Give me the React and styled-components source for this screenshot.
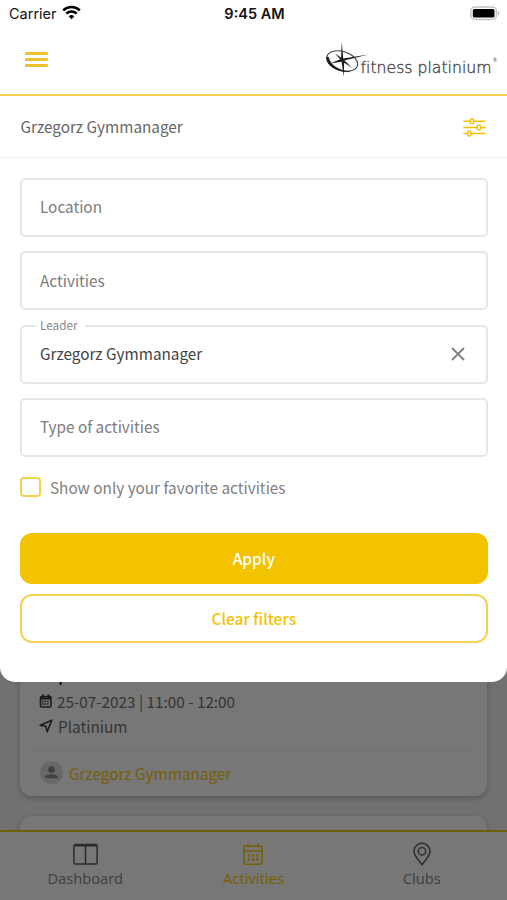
import React, { useState } from 'react'
import styled, { createGlobalStyle } from 'styled-components';

const yellow = '#f3c300';

const GlobalStyle = createGlobalStyle`
  * { box-sizing: border-box; }
  body {
    margin: 0;
    background: #fff;
    font-family: "Noto Sans CJK SC", "Noto Sans", sans-serif;
    overflow: hidden;
  }
  button { font-family: inherit; cursor: pointer; }
`;

// every layer sits in the same grid cell
const Screen = styled.div`
  display: grid;
  width: 507px;
  height: 900px;
  overflow: hidden;
`;

const Layer = styled.div`
  grid-area: 1 / 1;
  display: flex;
  flex-direction: column;
  min-height: 0;
  height: 900px;
`;

const Backdrop = styled(Layer)`
  background: rgba(0, 0, 0, 0.53);
`;

/* activities page, under the backdrop */

const Page = styled(Layer)`
  background: #f1f1f1;
`;

const List = styled.div`
  display: flex;
  flex-direction: column;
  gap: 20px;
  height: 830px;
  padding: 600px 20px 0;
  overflow: hidden;
`;

const Card = styled.div`
  flex: none;
  height: 196px;
  padding: 64px 12px 0;
  border-radius: 12px;
  background: #fcfcfc;
  box-shadow: 0 2px 6px rgba(0, 0, 0, 0.25);
`;

const CardTitle = styled.div`
  height: 24px;
  padding-left: 8px;
  line-height: 20px;
  font-size: 16px;
  font-weight: 500;
  color: #222;
`;

const CardLine = styled.div`
  display: flex;
  align-items: center;
  gap: ${({ $gap }) => $gap}px;
  height: 25px;
  padding-left: 7px;
  font-size: 15.3px;
  line-height: 24px;
  color: #707070;
`;

const CardLeader = styled.div`
  display: flex;
  align-items: center;
  gap: 6px;
  height: 44px;
  margin-top: 12px;
  padding-left: 8px;
  border-top: 1px solid #f0f0f0;
  font-size: 15.3px;
  line-height: 24px;
  color: #fbcb0c;
`;

const Nav = styled.nav`
  display: grid;
  grid-template-columns: repeat(3, 1fr);
  height: 70px;
  padding: 0 1px;
  border-top: 2px solid ${yellow};
  background: #fcfcfc;
`;

const NavItem = styled.div`
  display: flex;
  flex-direction: column;
  align-items: center;
  padding-top: 10px;
  font-family: "Noto Sans", sans-serif;
  font-size: 14.6px;
  line-height: 24px;
  color: ${({ $active }) => ($active ? '#fbcb0c' : '#8c8c8c')};
  svg { flex: none; }
`;

/* top part and filter sheet */

const Sheet = styled.div`
  height: 681.5px;
  border-radius: 0 0 15px 15px;
  background: #fff;
`;

const StatusBar = styled.div`
  display: grid;
  grid-template-columns: 1fr auto 1fr;
  align-items: center;
  height: 28px;
  padding: 0 7px 1px 9px;
  font-family: Inter, sans-serif;
  font-size: 14.5px;
  color: #111;
`;

const Carrier = styled.span`
  display: flex;
  align-items: center;
  gap: 6px;
  svg { margin: -2px 0 0 -1px; }
`;

const Time = styled.span`
  font-weight: 600;
  font-size: 14.5px;
`;

const Battery = styled.svg`
  justify-self: end;
`;

const Header = styled.header`
  display: flex;
  justify-content: space-between;
  height: 67.5px;
  padding: 0 10px 0 25px;
  border-bottom: 2px solid #f2d04a;
`;

const MenuButton = styled.button`
  display: flex;
  flex-direction: column;
  gap: 3.5px;
  width: 23px;
  margin-top: 24px;
  padding: 0;
  border: none;
  background: none;
`;

const MenuLine = styled.span`
  height: 2.5px;
  border-radius: 1px;
  background: #ecc32c;
`;

const Logo = styled.svg`
  margin-top: 12px;
`;

const FilterBar = styled.div`
  display: flex;
  align-items: center;
  justify-content: space-between;
  height: 62.5px;
  padding: 0 21px 0 20.5px;
  border-bottom: 1px solid #ececec;
  font-size: 15.3px;
  line-height: 24px;
  color: #666;
  svg { margin-top: 2px; }
`;

const Form = styled.form`
  display: flex;
  flex-direction: column;
  padding: 20px 19.5px 0 20px;
`;

const Field = styled.fieldset`
  height: ${({ $label }) => ($label ? 65 : 59)}px;
  margin: ${({ $label }) => ($label ? -6 : 0)}px 0 14.3px;
  padding: 0 21px 0 18px;
  min-width: 0;
  border: 2px solid #e6e6e6;
  border-radius: 5px;
`;

const Value = styled.div`
  display: flex;
  align-items: center;
  justify-content: space-between;
  height: ${({ $filled }) => ($filled ? 41.5 : 52.5)}px;
  font-size: 15.3px;
  line-height: 24px;
  color: ${({ $filled }) => ($filled ? '#444' : '#7c7c7c')};
  svg { margin-top: 2px; }
`;

const Legend = styled.legend`
  height: 14px;
  margin-left: -4px;
  padding: 0 7px 0 4px;
  font-size: 11.8px;
  line-height: 12px;
  color: #888;
`;

const Check = styled.label`
  display: flex;
  align-items: center;
  gap: 9.5px;
  height: 24px;
  margin: 4px 0 33.5px;
  font-size: 15.3px;
  line-height: 22px;
  color: #808080;
`;

const Box = styled.input`
  appearance: none;
  width: 20.5px;
  height: 20.5px;
  margin: 0;
  border: 2px solid #f3d250;
  border-radius: 4px;
  background: #fff;
  &:checked { background: ${yellow}; }
`;

const Button = styled.button`
  height: ${({ $primary }) => ($primary ? 51 : 49)}px;
  margin-bottom: 10px;
  padding: 0 0 1px;
  border: 2px solid ${({ $primary }) => ($primary ? yellow : '#f3d250')};
  border-radius: 12px;
  background: ${({ $primary }) => ($primary ? yellow : '#fff')};
  font-size: 15.5px;
  font-weight: 500;
  line-height: 24px;
  color: ${({ $primary }) => ($primary ? '#fff' : yellow)};
`;

const WifiIcon = () => (
  <svg width="19" height="15" viewBox="0 0 19 15" fill="none" stroke="#000" strokeWidth="2.5">
    <path d="M1.2 5.3a12 12 0 0 1 16.6 0" />
    <path d="M4.3 8.7a7.5 7.5 0 0 1 10.4 0" />
    <path d="M9.5 14.2 6.8 11.4a3.9 3.9 0 0 1 5.4 0z" fill="#000" stroke="none" />
  </svg>
);

const LogoText = styled.text`
  font-family: "DejaVu Sans", sans-serif;
  font-weight: 200;
  font-size: 16.5px;
  font-variant-ligatures: none;
  fill: #4a4a4a;
  stroke: #4a4a4a;
  stroke-width: 0.4px;
`;

const LogoMark = () => (
  <Logo width="171" height="38" viewBox="0 0 171 38">
    <ellipse cx="16.2" cy="21" rx="16" ry="9.4" transform="rotate(18 16.2 21)" fill="none" stroke="#444" strokeWidth="1.1" />
    <path d="M1 17C-1 25 12 33 24 31.500C13 31 4 25 2.500 17z" fill="#1c1c1c" stroke="#1c1c1c" strokeWidth="0.500" />
    <path d="M15.800 1.500L17.200 18.400L42.500 14.600L18.200 20.600L17.800 37L15.600 21.800L4 23.600L15 19z" fill="#1c1c1c" />
    <path d="M9 13.500L17.200 19L26 28L15.700 21z" fill="#1c1c1c" />
    <LogoText x="34.500" y="32.500" textLength="131" lengthAdjust="spacingAndGlyphs">fitness platinium</LogoText>
    <text x="167" y="22" fontFamily="Lato, sans-serif" fontSize="5" fill="#555">®</text>
  </Logo>
);

const FilterIcon = () => (
  <svg width="23" height="19" viewBox="0 0 23 19" fill="none" stroke={yellow} strokeWidth="1.500" strokeLinecap="round">
    <path d="M1 3.200h6.200M11 3.200h11M1 9.400h13M18 9.400h4M1 15.600h3.400M8.400 15.600H22" />
    <rect x="7.400" y="0.900" width="3.400" height="4.800" rx="1.600" />
    <rect x="14.200" y="7" width="3.400" height="4.800" rx="1.600" />
    <rect x="4.600" y="13.200" width="3.400" height="4.800" rx="1.600" />
  </svg>
);

const CloseIcon = () => (
  <svg width="14" height="14" viewBox="0 0 14 14" stroke="#808080" strokeWidth="1.800">
    <path d="M1 1l12 12M13 1L1 13" />
  </svg>
);

const SmallCalendar = () => (
  <svg width="13" height="14" viewBox="0 0 13 14" fill="none" stroke="#3c3c3c">
    <rect x="1.500" y="2.600" width="10.500" height="10.400" rx="1.200" strokeWidth="1.600" />
    <path d="M1.500 4.400h10.500M4 0.600v3M9.500 0.600v3" strokeWidth="2" />
    <path d="M3 7.500h7.500M3 10h7.500" strokeWidth="1.500" strokeDasharray="1.700 0.800" />
  </svg>
);

const ArrowIcon = () => (
  <svg width="14" height="14" viewBox="0 0 14 14" fill="none" stroke="#3c3c3c" strokeWidth="1.600" strokeLinejoin="round">
    <path d="M1.200 6.200L12.800 1.200L8.200 12.800L6.800 7.300z" />
  </svg>
);

const Avatar = () => (
  <svg width="23" height="23" viewBox="0 0 23 23">
    <circle cx="11.500" cy="11.500" r="11.500" fill="#dcdedf" />
    <circle cx="11.500" cy="8.600" r="3.300" fill="#888" />
    <path d="M5 17.200c0-3 3.500-3.900 6.500-3.900s6.500.9 6.500 3.900z" fill="#888" />
  </svg>
);

const DashboardIcon = () => (
  <svg width="25" height="24" viewBox="0 0 25 24" fill="none" stroke="#5c5c5c" strokeWidth="1.500">
    <rect x="0.900" y="2.500" width="23.200" height="19.500" rx="1.800" />
    <path d="M1 3.500h23" strokeWidth="2" />
    <path d="M12.500 3v19" />
  </svg>
);

const CalendarIcon = () => (
  <svg width="20" height="24" viewBox="0 0 20 24" fill="none" stroke="#fbcb0c" strokeWidth="1.500">
    <rect x="0.900" y="4" width="18.200" height="18.300" rx="2" />
    <path d="M1 9h18M5 1.500V5.500M15 1.500V5.500" />
    <path d="M4.800 13.500h10.800M4.800 17.500h10.800" strokeWidth="2.300" strokeDasharray="2.400 1.800" />
  </svg>
);

const PinIcon = () => (
  <svg width="18" height="24" viewBox="0 0 18 24" fill="none" stroke="#6c6e72" strokeWidth="1.700">
    <path d="M9 22.800C5 17.500 1 13.500 1 9.200a8 8 0 0 1 16 0C17 13.500 13 17.500 9 22.800z" />
    <circle cx="9" cy="9.200" r="3.700" />
  </svg>
);

const tabs = [
  { name: 'Dashboard', icon: <DashboardIcon /> },
  { name: 'Activities', icon: <CalendarIcon />, active: true },
  { name: 'Clubs', icon: <PinIcon /> },
];

function App() {
  const [leader, setLeader] = useState('Grzegorz Gymmanager');
  const [favorite, setFavorite] = useState(false);

  const Clear = () => {
    setLeader('');
    setFavorite(false);
  }

  return (
    <>
      <GlobalStyle />
      <Screen>

        <Page>
          <List>
            <Card>
              <CardTitle>Top</CardTitle>
              <CardLine $gap={5}><SmallCalendar />25-07-2023 | 11:00 - 12:00</CardLine>
              <CardLine $gap={5}><ArrowIcon />Platinium</CardLine>
              <CardLeader><Avatar />Grzegorz Gymmanager</CardLeader>
            </Card>
            <Card />
          </List>
          <Nav>
            {tabs.map((tab) => (
              <NavItem key={tab.name} $active={tab.active}>{tab.icon}{tab.name}</NavItem>
            ))}
          </Nav>
        </Page>

        <Backdrop />

        <Layer>
          <Sheet>
            <StatusBar>
              <Carrier>Carrier <WifiIcon /></Carrier>
              <Time>9:45 AM</Time>
              <Battery width="30" height="15" viewBox="0 0 30 15">
                <rect x="0.900" y="1" width="25.500" height="12.500" rx="4" fill="#fff" stroke="#c4c4c4" strokeWidth="1.500" />
                <rect x="2.800" y="2.900" width="21.700" height="8.700" rx="1.500" fill="#000" />
                <path d="M27.800 5v4.500c2-.8 2-3.700 0-4.500z" fill="#b5b5b5" />
              </Battery>
            </StatusBar>

            <Header>
              <MenuButton aria-label="Menu">
                <MenuLine /><MenuLine /><MenuLine />
              </MenuButton>
              <LogoMark />
            </Header>

            <FilterBar>Grzegorz Gymmanager<FilterIcon /></FilterBar>

            <Form onSubmit={(e) => e.preventDefault()}>
              <Field><Value>Location</Value></Field>
              <Field><Value>Activities</Value></Field>
              {leader ? (
                <Field $label>
                  <Legend>Leader</Legend>
                  <Value $filled>
                    {leader}
                    <CloseIcon />
                  </Value>
                </Field>
              ) : <Field><Value>Leader</Value></Field>}
              <Field><Value>Type of activities</Value></Field>
              <Check>
                <Box type="checkbox" checked={favorite} onChange={(e) => setFavorite(e.target.checked)} />
                Show only your favorite activities
              </Check>
              <Button $primary>Apply</Button>
              <Button type="button" onClick={Clear}>Clear filters</Button>
            </Form>
          </Sheet>
        </Layer>

      </Screen>
    </>
  )
}

export default App;
